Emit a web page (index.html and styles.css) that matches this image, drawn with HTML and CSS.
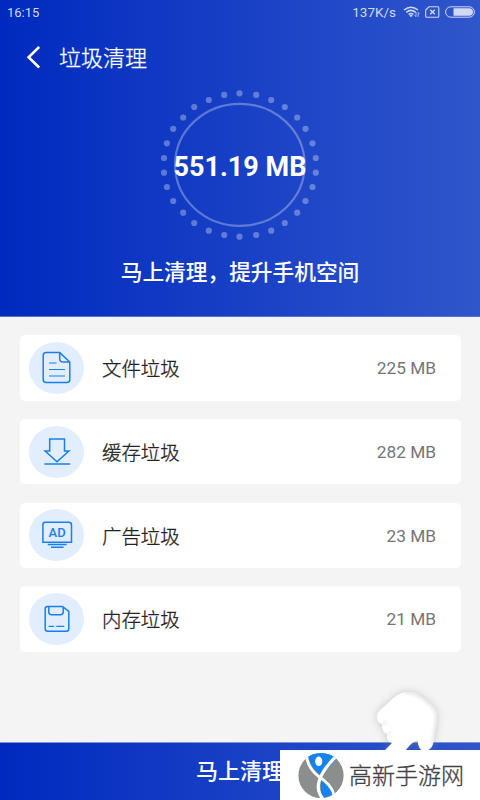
FILE: index.html
```html
<!DOCTYPE html>
<html lang="zh-CN">
<head>
<meta charset="utf-8">
<title>垃圾清理</title>
<link rel="stylesheet" href="styles.css">
</head>
<body>
<div class="screen">
  <header class="hero">
    <div class="status">
      <span>16:15</span>
      <div class="status-right">
        <span class="speed">137K/s</span>
        <svg class="wifi" width="17" height="14" viewBox="0 0 17 14" fill="none" stroke="currentColor" stroke-width="1.5"><path d="M1 5Q8 -.7 15 5M3.3 7.3Q8 3.4 12.7 7.3M5.6 9.4Q8 7.5 10.4 9.4"/><path d="M6.3 10.5 8 12.2l1.7-1.7Q8 9.2 6.3 10.5Z" fill="currentColor" stroke="none"/><path d="M13 7v4.5m-1.5-1.4 1.5 1.7M15.2 11.8V7.5m1.2 1.3-1.2-1.4" stroke-width=".8"/></svg>
        <svg class="sim" width="15" height="12" viewBox="0 0 15 12" fill="none" stroke="currentColor" stroke-width="1.1"><path d="M4 .8h8.8q1 0 1 1v8.4q0 1-1 1H1.7q-1 0-1-1V4Z"/><path d="m5.2 3.7 4.6 4.6m0-4.6L5.2 8.3" stroke-width="1.5"/></svg>
        <svg class="battery" width="30" height="12" viewBox="0 0 30 12"><rect x=".6" y=".8" width="28.8" height="10.4" rx="5.2" fill="none" stroke="currentColor"/><path d="M8.5 2.2h15.7a3.8 3.8 0 0 1 0 7.6H8.5Z" fill="currentColor"/></svg>
      </div>
    </div>
    <div class="titlebar">
      <svg width="14" height="24" viewBox="0 0 14 24" fill="none" stroke="#fff" stroke-width="2.6"><path d="M13.2 2 2.6 12.2 13.2 22.6"/></svg>
      <h1>垃圾清理</h1>
    </div>
    <div class="gauge">
      <svg width="160" height="150" viewBox="159.8 90 160 150">
        <ellipse cx="239.700" cy="164.800" rx="64.800" ry="61" fill="none" stroke="#fff" stroke-opacity=".31" stroke-width="2.2"/>
        <g fill="#fff" fill-opacity=".32">
          <circle cx="239.3" cy="93.3" r="3.1"/><circle cx="256" cy="94.9" r="3.1"/><circle cx="271" cy="100" r="3.1"/><circle cx="284.6" cy="107" r="3.1"/><circle cx="297" cy="117.5" r="3.1"/><circle cx="305.3" cy="128.8" r="3.1"/><circle cx="312.3" cy="143.3" r="3.1"/><circle cx="315.6" cy="158" r="3.1"/><circle cx="315.6" cy="172.7" r="3.1"/><circle cx="312.3" cy="187" r="3.1"/><circle cx="305.3" cy="201" r="3.1"/><circle cx="297" cy="212.7" r="3.1"/><circle cx="284.6" cy="223" r="3.1"/><circle cx="271" cy="230.7" r="3.1"/><circle cx="256" cy="235" r="3.1"/>
          <circle cx="239.3" cy="236.7" r="3.1"/><circle cx="224" cy="235" r="3.1"/><circle cx="208.6" cy="230.7" r="3.1"/><circle cx="194" cy="223" r="3.1"/><circle cx="183" cy="212.7" r="3.1"/><circle cx="173" cy="201" r="3.1"/><circle cx="166.7" cy="187" r="3.1"/><circle cx="163.8" cy="172.7" r="3.1"/><circle cx="163.8" cy="158" r="3.1"/><circle cx="166.7" cy="143.3" r="3.1"/><circle cx="173" cy="128.8" r="3.1"/><circle cx="183" cy="117.5" r="3.1"/><circle cx="194" cy="107" r="3.1"/><circle cx="208.6" cy="100" r="3.1"/><circle cx="224" cy="94.9" r="3.1"/>
        </g>
      </svg>
      <strong>551.19 MB</strong>
    </div>
    <p class="tip">马上清理，提升手机空间</p>
  </header>

  <main class="list">
    <div class="row">
      <span class="icon"><svg width="32" height="34" viewBox="0 0 32 34"><path d="M18.7 1.6H5.2q-3 0-3 3v24q0 3 3 3h20.6q3 0 3-3V11Z"/><path d="M18.7 1.6v5.8q0 3.6 3.6 3.6h6.5"/><path class="thin" d="M8 12h7.500M8 18.500h16M8 25h16"/></svg></span>
      <span class="name">文件垃圾</span><span class="size">225 MB</span>
    </div>
    <div class="row">
      <span class="icon"><svg width="32" height="34" viewBox="0 0 32 34"><path d="M8.7 4.1h14.8v12h4.4L16 26.8 4.1 16.1h4.6Z"/><path d="M3.3 29h25.8"/></svg></span>
      <span class="name">缓存垃圾</span><span class="size">282 MB</span>
    </div>
    <div class="row">
      <span class="icon"><svg width="32" height="34" viewBox="0 0 32 34"><path d="M4.2 4.2h23.600q2.700 0 2.700 2.700v17.400H1.900V6.900q0-2.700 2.300-2.700Z"/><path d="M6.700 26.600h19M10 29.200h12.600"/><text x="16.1" y="18.900" text-anchor="middle">AD</text></svg></span>
      <span class="name">广告垃圾</span><span class="size">23 MB</span>
    </div>
    <div class="row">
      <span class="icon"><svg width="32" height="34" viewBox="0 0 32 34"><path d="M6.500 4.500h15l6.300 4.800v17.500q0 2.500-2.500 2.500H6.700q-2.500 0-2.500-2.500V6.800q0-2.300 2.300-2.300Z"/><path d="M7.800 4.500V10q0 2.700 2.700 2.700h9Q22.200 12.700 22.200 10V5"/><path class="thin" d="M7.600 24.300h5.500M15.300 24.300h8"/></svg></span>
      <span class="name">内存垃圾</span><span class="size">21 MB</span>
    </div>
  </main>

  <footer class="action">马上清理</footer>

  <svg class="hand" width="100" height="80" viewBox="360 680 100 80">
    <defs>
      <filter id="soft" x="-30%" y="-30%" width="160%" height="160%"><feGaussianBlur stdDeviation="4.5"/></filter>
      <filter id="edge" x="-20%" y="-20%" width="140%" height="140%"><feGaussianBlur stdDeviation="1.5"/></filter>
      <clipPath id="shape"><path id="palm" d="M383 752 392 743Q386 742 387 734Q381 732 382 724Q376 722 377 715Q378 711 387 704C394 697 399 692 408 692C416 692 421 696 428 702C435 707 437.500 712 437 719L433 744Q431 751 424 751Q418 750 417.500 740Q413 741 404 752Z"/></clipPath>
    </defs>
    <use href="#palm" fill="#888" opacity=".42" filter="url(#soft)"/>
    <use href="#palm" fill="#fff"/>
    <g clip-path="url(#shape)">
      <g fill="none" stroke="#e8e8e8" filter="url(#edge)">
        <path d="M404 692Q416 691 428 702Q438 709 437 719L433 746" stroke-width="4"/>
        <path d="M382 725 387 721M387 735 392 731" stroke-width="2"/>
      </g>
    </g>
  </svg>

  <div class="brand">
    <svg width="46" height="48" viewBox="0 0 46 48">
      <defs><clipPath id="disc"><circle cx="23" cy="24.500" r="22.600"/></clipPath></defs>
      <g clip-path="url(#disc)">
        <path d="M0 0h46v48H0Z" fill="#8b8e8d"/>
        <path d="M9 0H39V8Q31 15 24 25Q10 16 10 0Z" fill="#1583eb"/>
        <path d="M23 29Q36 38 34 44L23 48Z" fill="#1583eb"/>
        <path d="M8.500 2Q8 15 20 25Q34 34 36 44" fill="none" stroke="#fff" stroke-width="2.800"/>
        <path d="M39.500 4Q25 18 21.500 29C19 36 20 42 25 48" fill="none" stroke="#fff" stroke-width="3.200"/>
        <ellipse cx="20.700" cy="10.300" rx="3.500" ry="4.800" fill="#fff"/>
      </g>
    </svg>
    <span>高新手游网</span>
  </div>
</div>
</body>
</html>
```
FILE: styles.css
```css
* { box-sizing: border-box; }
body { margin: 0; font-family: Roboto, "Noto Sans CJK SC", sans-serif; }
.screen {
  position: relative;
  display: flex;
  flex-direction: column;
  width: 480px;
  height: 800px;
  overflow: hidden;
  background: #f4f4f4;
}
.hero {
  display: flex;
  flex-direction: column;
  align-items: center;
  height: 317px;
  border-bottom: 1px solid #5471d2;
  background: linear-gradient(90deg, #002abf, #3056cb);
  color: #fff;
}
.status {
  display: flex;
  justify-content: space-between;
  align-items: center;
  align-self: stretch;
  height: 24px;
  padding: 0 5px 0 7px;
  color: #d0d8f3;
  font-size: 13px;
}
.status-right { display: flex; align-items: center; }
.speed { font-size: 13.5px; margin-right: 7px; }
.wifi { margin-right: 5px; }
.sim { margin-right: 5px; }
.titlebar {
  display: flex;
  align-items: center;
  align-self: stretch;
  gap: 19px;
  height: 66px;
  padding: 0 0 0 26px;
}
.titlebar h1 {
  margin: 0;
  padding-top: 4px;
  font-size: 22px;
  line-height: 30px;
  font-weight: 300;
  -webkit-text-stroke: .3px currentColor;
}
.gauge { display: grid; place-items: center; height: 150px; }
.gauge > * { grid-area: 1 / 1; }
.gauge strong { padding-top: 3px; font-size: 27px; line-height: 30px; font-weight: 700; }
.tip { margin: 17px 0 0; font-size: 21.7px; line-height: 32px; font-weight: 500; }
.list { display: flex; flex-direction: column; gap: 18.3px; padding: 18.2px 19.5px 0; flex: 1; }
.row {
  display: flex;
  align-items: center;
  height: 65.4px;
  padding: 0 24.5px 0 9.5px;
  border-radius: 5px;
  background: #fff;
}
.icon {
  display: grid;
  place-items: center;
  width: 55px;
  height: 52px;
  margin-right: 18px;
  border-radius: 50%;
  background: #e2eefd;
}
.icon svg { fill: none; stroke: #1780ee; stroke-width: 1.5; }
.icon .thin { stroke-width: 1.2; }
.icon text { fill: #1780ee; stroke: none; font-size: 13px; font-weight: 500; }
.name {
  flex: 1;
  color: #222;
  font-size: 19.4px;
  font-weight: 300;
  -webkit-text-stroke: .3px currentColor;
}
.size { padding-top: 1px; color: #757575; font-size: 17.3px; }
.action {
  height: 58px;
  border-top: 1px solid #8093d5;
  background: linear-gradient(90deg, #002abf, #3056cb);
  color: #fff;
  font-size: 22px;
  font-weight: 500;
  line-height: 57px;
  text-align: center;
}
.hand { position: absolute; left: 360px; top: 680px; }
.brand {
  position: absolute;
  right: 0;
  bottom: 0;
  display: flex;
  align-items: center;
  gap: 5px;
  width: 200px;
  height: 50px;
  padding-left: 18px;
  background: #fff;
  color: #414141;
  font-size: 23px;
  font-weight: 300;
  -webkit-text-stroke: .3px currentColor;
}
.brand span { padding-bottom: 2px; }
```
